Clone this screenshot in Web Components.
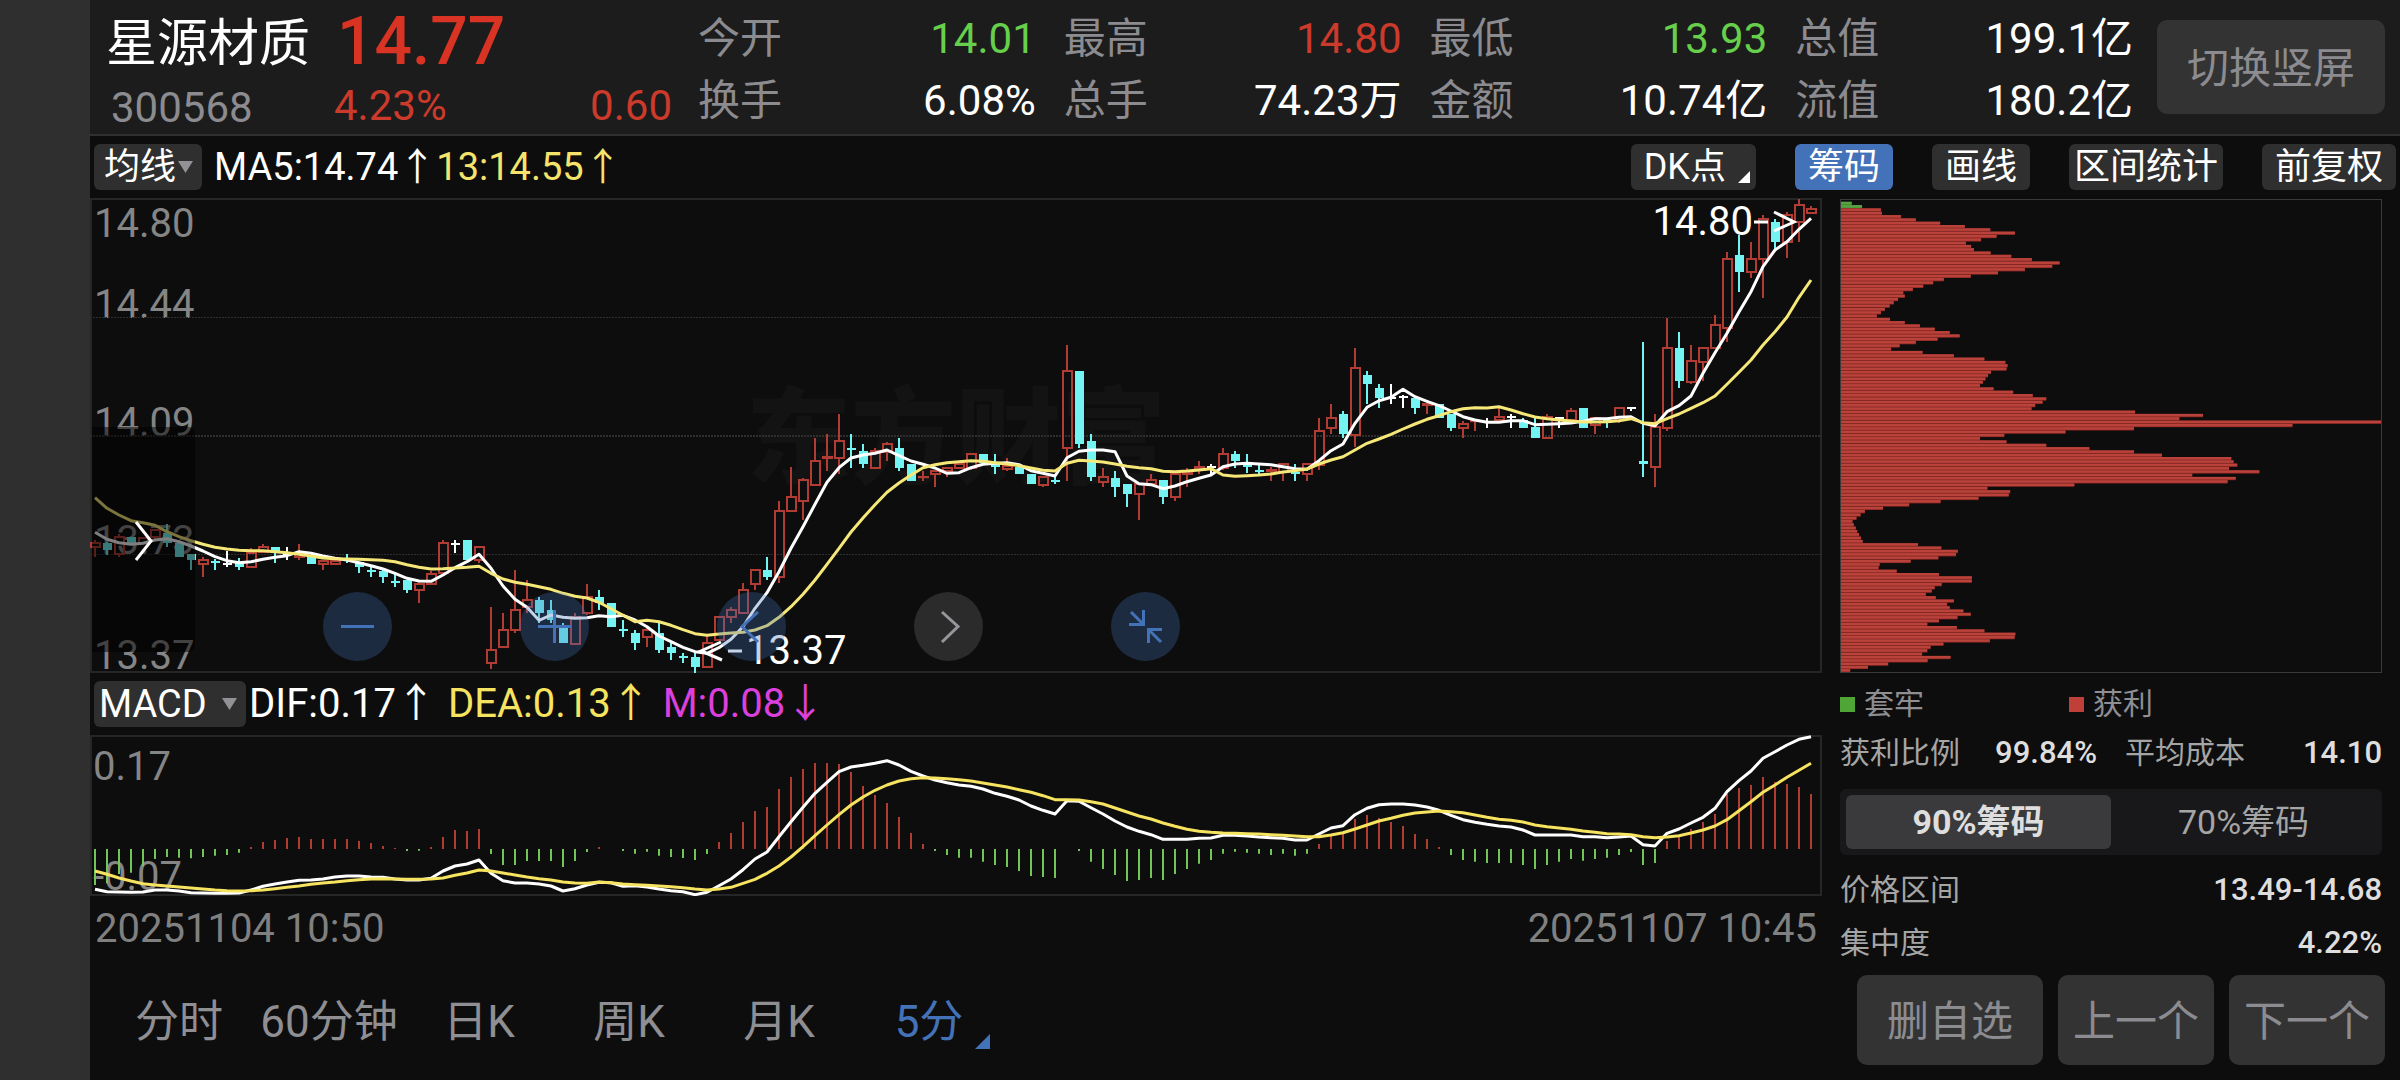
<!DOCTYPE html>
<html lang="zh-CN">
<head>
<meta charset="utf-8">
<meta name="viewport" content="width=device-width, initial-scale=1">
<title>星源材质 300568</title>
<style>
  html, body { margin: 0; background: #0d0d0d; }
  body {
    --up: #cc3a2b; --down: #66cf4b; --muted: #8b8b90; --blue: #4472b8; --panel: #333333; --line: #262626;
    font-family: Roboto, "Noto Sans CJK SC", sans-serif; color: #fff;
  }
</style>
</head>
<body>
<stock-page></stock-page>
<script>
const base = `<style>
  * { box-sizing: border-box; }
  button, select, input { font: inherit; color: inherit; margin: 0; border: 0; padding: 0; background: none; }
</style>`;
function define(name, html, setup) {
  customElements.define(name, class extends HTMLElement {
    connectedCallback() {
      if (this.shadowRoot) return;
      const root = this.attachShadow({ mode: "open" });
      root.innerHTML = base + (typeof html === "function" ? html(this) : html);
      if (setup) setup(root, this);
    }
  });
}

/* label and value pair in the header */
define("quote-stat", `<style>
  :host { display: flex; justify-content: space-between; font-size: 42px; line-height: 62px; white-space: nowrap; }
  .k { color: var(--muted); }
  :host([tone=up]) .v { color: var(--up); }
  :host([tone=down]) .v { color: var(--down); }
</style><span class="k"><slot name="label"></slot></span><span class="v"><slot></slot></span>`);

define("big-button", `<style>
  :host { display: flex; }
  button { flex: 1; background: var(--panel); color: var(--muted); border-radius: 10px; padding-top: 3px; font-size: 42px; line-height: 60px; white-space: nowrap; }
</style><button type="button"><slot></slot></button>`);

define("quote-header", () => {
  const s = (l, v, t = "") => `<quote-stat ${t && `tone="${t}"`}><span slot="label">${l}</span>${v}</quote-stat>`;
  return `<style>
  :host { display: flex; align-items: center; height: 136px; background: #1c1c1c; border-bottom: 2px solid #303030; padding: 0 15px 0 16px; }
  .id { width: 228px; padding-top: 6px; }
  .name { font-size: 51px; line-height: 76px; margin: 0; font-weight: 400; white-space: nowrap; }
  .code { font-size: 42px; line-height: 52px; color: var(--muted); padding: 0 0 0 5px; }
  .price { width: 338px; color: var(--up); padding-top: 2px; }
  .last { font-size: 66px; line-height: 76px; font-weight: 500; padding-left: 3px; color: #d93324; }
  .chg { display: flex; justify-content: space-between; font-size: 42px; line-height: 52px; }
  .stats { flex: 1; display: grid; grid-template-columns: repeat(4, 1fr); column-gap: 28px; padding: 6px 24px 0 26px; }
  big-button { width: 228px; height: 94px; }
</style>
<div class="id"><h1 class="name">星源材质</h1><div class="code">300568</div></div>
<div class="price"><div class="last">14.77</div><div class="chg"><span>4.23%</span><span>0.60</span></div></div>
<div class="stats">
${s("今开", "14.01", "down")}${s("最高", "14.80", "up")}${s("最低", "13.93", "down")}${s("总值", "199.1亿")}
${s("换手", "6.08%")}${s("总手", "74.23万")}${s("金额", "10.74亿")}${s("流值", "180.2亿")}
</div>
<big-button>切换竖屏</big-button>`;
});

define("tool-button", `<style>
  :host { display: block; }
  button { display: block; position: relative; background: #2f2f2f; border-radius: 6px; height: 46px; padding: 0 13px; font-size: 36px; line-height: 47px; white-space: nowrap; }
  :host([compact]) button { padding: 0 5px; }
  :host([menu]) button { padding-right: 30px; }
  :host([active]) button { background: var(--blue); }
  svg { display: none; position: absolute; right: 6px; bottom: 7px; }
  :host([menu]) svg { display: block; }
</style><button type="button"><slot></slot><svg width="12" height="12"><path d="M12 0V12H0z" fill="#fff"/></svg></button>`);

define("indicator-select", el => `<style>
  :host { display: block; position: relative; }
  select { display: block; appearance: none; background: #2f2f2f; border-radius: 6px; height: 46px; width: 100%; padding: 0 0 0 ${el.getAttribute("pad")}px; font-size: 36px; line-height: 46px; outline: 0; }
  :host([wide]) select { font-size: 38px; }
  svg { position: absolute; right: 9px; top: 17px; pointer-events: none; }
</style><select aria-label="指标"><option>${el.getAttribute("value")}</option></select>
<svg width="15" height="12"><path d="M0 0H15L7.5 12z" fill="#929296"/></svg>`);

define("indicator-value", `<style>
  :host { display: block; font-size: 38px; line-height: 46px; white-space: nowrap; }
</style><slot></slot>`);

define("chart-toolbar", `<style>
  :host { display: flex; align-items: center; justify-content: space-between; height: 62px; padding: 0 4px; }
  div { display: flex; align-items: center; }
  .r { gap: 39px; }
  indicator-select { width: 108px; margin-right: 12px; }
  .y { color: #f6e36c; }
</style>
<div><indicator-select value="均线" pad="10"></indicator-select><indicator-value>MA5:14.74↑</indicator-value><indicator-value class="y">13:14.55↑</indicator-value></div>
<div class="r"><tool-button menu>DK点</tool-button><tool-button active>筹码</tool-button><tool-button>画线</tool-button><tool-button compact>区间统计</tool-button><tool-button>前复权</tool-button></div>`);

/* candles: kind, high, body top, body bottom, low, in thirds of a pixel */
const candles = `r 1050 1059 1071 1100|c 1057 1060 1080 1095|r 1033 1041 1091 1100|c 1040 1040 1058 1060|r 1042 1043 1060 1060|r 1018 1020 1042 1050|c 1003 1030 1060 1070|c 1060 1060 1100 1100|c 1092 1092 1110 1140|r 1100 1110 1121 1160
c 1108 1112 1120 1140|w 1083 1118 1124 1130|c 1103 1117 1130 1140|r 1073 1088 1131 1132|r 1062 1071 1087 1090|c 1072 1072 1090 1120|w 1072 1090 1096 1110|r 1062 1093 1101 1110|c 1100 1100 1122 1122|r 1110 1112 1122 1140
r 1112 1113 1122 1123|c 1092 1108 1113 1120|c 1115 1115 1130 1150|c 1130 1140 1147 1160|c 1137 1142 1160 1180|c 1152 1172 1178 1190|c 1170 1170 1200 1210|r 1175 1181 1201 1240|r 1143 1151 1182 1182|r 1050 1059 1150 1150
w 1050 1058 1064 1090|c 1050 1050 1110 1110|r 1070 1071 1111 1120|r 1250 1379 1419 1438|r 1270 1319 1370 1371|r 1140 1259 1321 1328|r 1170 1229 1250 1270|c 1220 1230 1270 1300|c 1230 1260 1290 1300|c 1300 1310 1360 1360
r 1270 1280 1361 1362|r 1182 1221 1270 1275|c 1200 1220 1238 1260|c 1240 1240 1310 1310|c 1290 1317 1323 1340|c 1320 1330 1360 1380|r 1310 1319 1340 1370|c 1297 1330 1380 1390|c 1360 1370 1390 1410|c 1388 1398 1403 1420
c 1388 1400 1430 1450|r 1338 1359 1431 1431|r 1279 1280 1350 1350|r 1250 1260 1281 1300|r 1180 1200 1270 1270|r 1139 1140 1181 1200|c 1102 1140 1160 1170|r 933 962 1162 1180|r 832 921 963 963|r 863 871 933 990
r 743 812 884 884|r 733 802 803 843|r 673 753 803 853|c 733 774 780 833|c 763 783 823 833|r 775 784 833 833|r 755 762 785 812|c 743 773 833 843|c 822 822 872 872|r 843 861 862 872
r 842 843 853 892|r 832 833 843 860|r 822 823 833 833|r 791 792 833 840|c 793 793 820 820|c 793 820 830 853|r 803 827 837 843|c 830 830 853 853|c 852 852 882 882|r 861 862 885 891
c 860 870 877 882|r 465 543 774 872|c 544 544 763 773|c 733 753 862 872|r 833 861 875 890|c 843 863 890 921|c 882 882 912 951|r 880 881 912 991|r 853 871 882 882|c 871 871 921 941
r 852 852 922 932|r 835 850 853 891|r 813 831 835 853|w 822 829 835 852|r 773 792 835 840|c 783 793 812 833|c 793 815 830 850|c 825 839 845 852|r 830 839 843 872|r 822 823 846 872
c 822 845 852 872|r 822 823 853 872|r 684 722 825 840|r 643 683 714 732|c 663 673 733 743|r 475 534 734 770|c 544 554 583 643|c 583 593 623 653|w 583 622 628 643|w 615 619 625 653
c 623 623 653 672|r 640 641 644 672|c 643 643 683 683|c 672 672 713 722|r 693 702 714 743|r 690 692 694 722|w 683 692 698 713|r 650 682 690 690|w 673 679 685 713|c 683 690 713 713
c 683 712 743 743|r 673 682 745 745|w 680 680 686 713|r 653 662 690 690|c 653 653 713 713|r 680 683 705 732|c 683 690 700 713|r 652 653 690 700|w 650 650 656 662|c 455 814 821 862
r 673 712 832 891|r 385 474 713 722|c 425 474 573 593|r 465 513 577 583|r 473 474 515 573|r 375 404 475 475|r 186 206 415 455|c 136 195 245 305|r 156 206 247 265|r 76 87 206 325
c 87 97 156 178|r 67 74 157 205|r 27 46 97 156|r 48 56 69 69`.split(/[|\n]/).map(r => { const a = r.trim().split(" "); return [a[0], ...a.slice(1).map(Number)]; });

const ma5 = [1027,1048,1058,1063,1060,1050,1046,1055,1068,1083,1100,1112,1118,1115,1108,1102,1097,1085,1090,1098,1105,1110,1118,1127,1137,1150,1165,1173,1174,1155,1133,1115,1093,1135,1188,1228,1252,1291,1275,1282,1285,1283,1277,1280,1276,1290,1310,1338,1355,1372,1385,1390,1373,1348,1310,1255,1208,1145,1075,1010,943,877,833,804,795,790,780,797,813,823,834,850,848,833,823,820,818,824,842,850,858,803,784,780,780,785,858,881,884,896,888,875,865,855,830,822,820,822,824,830,836,838,812,782,762,700,652,632,622,598,620,634,647,663,680,690,697,697,692,692,704,703,701,699,694,686,686,682,680,700,707,665,647,618,550,488,430,366,305,230,180,155,118,85];
const ma13 = [923,955,975,992,998,1006,1025,1040,1052,1063,1072,1077,1081,1082,1082,1085,1088,1093,1098,1104,1106,1107,1108,1109,1111,1115,1124,1132,1137,1136,1134,1132,1129,1150,1167,1177,1183,1190,1198,1210,1219,1224,1237,1256,1276,1295,1291,1295,1306,1319,1331,1336,1332,1329,1327,1320,1307,1282,1250,1213,1170,1123,1075,1026,984,944,907,879,855,833,824,818,815,812,814,818,822,827,834,841,843,820,811,813,816,822,829,833,836,844,845,843,840,836,855,859,857,855,852,846,842,837,822,810,800,780,760,747,733,717,702,688,677,665,656,653,654,650,660,671,681,686,690,693,696,696,695,692,686,698,701,686,672,655,638,618,583,547,510,465,425,381,322,270];
const bars = [645,640,612,608,588,567,561,563,565,561,557,555,548,531,516,510,504,501,507,507,507,507,513,519,528,534,543,542,531,501,480,483,477,552,585,585,573,573,573,591,573,546,531,537,543,551,545,557,561,564,570,552,516,489,456,423,411,357,321,297,279,279,282,306,348,375,399,441,489,522,543,555,563,563,575,585,591,603,618,621,624,537,543,575,597,615,633,630,624,630,612,597,581,570,551,545,548,551,555,551,557,551,522,495,492,447,435,444,456,468,492,507,531,555,570,575,579,579,579,585,597,585,575,567,572,567,563,555,546,585,579,513,495,477,456,432,372,354,345,321,336,342,351,372];
const dif = [658,665,666,667,666,660,660,663,668,669,670,670,669,660,649,642,636,631,630,627,621,618,618,621,622,627,630,630,625,603,588,582,570,610,632,639,639,642,648,663,656,645,637,638,649,647,651,657,662,665,674,667,647,627,599,567,546,500,455,412,370,337,305,291,286,280,272,285,304,318,330,338,345,349,357,370,379,390,408,421,432,392,394,413,432,453,471,484,494,508,508,508,505,504,496,496,498,501,503,505,510,510,492,474,467,434,415,404,402,402,405,411,421,436,449,457,463,468,471,480,495,495,495,495,500,500,503,501,498,524,528,490,477,459,442,415,365,332,303,265,245,225,208,200];
const dea = [603,613,624,633,641,645,648,651,654,657,660,662,663,662,660,656,652,648,643,639,636,632,629,627,626,627,628,628,627,624,616,609,600,603,609,615,621,626,630,636,639,640,636,638,642,644,646,648,650,653,657,660,657,652,640,628,610,588,561,530,497,465,434,405,381,361,345,333,326,323,324,326,329,333,339,345,351,359,367,377,389,389,390,395,402,414,426,438,447,459,469,478,484,487,489,490,491,492,494,496,498,500,500,495,488,477,465,453,445,436,429,426,423,425,428,435,442,448,451,456,465,470,474,478,483,487,491,492,494,500,503,501,497,489,480,468,449,422,395,367,345,322,301,280];
const chips = [82,110,161,164,216,256,322,389,458,525,475,433,392,406,414,459,515,571,646,626,552,479,405,332,303,276,248,222,226,208,196,185,172,161,150,186,226,267,307,348,375,315,256,212,189,274,359,442,499,505,502,460,452,445,438,430,467,520,573,610,600,580,570,851,1035,971,1520,1278,848,662,496,430,502,610,727,848,924,1112,1118,1128,1106,1188,1006,1124,1102,686,450,512,508,426,323,238,167,118,106,95,84,88,93,97,102,107,112,262,325,370,365,317,242,158,155,204,319,408,408,326,307,299,283,310,359,341,348,385,405,369,319,287,367,442,526,524,457,331,296,287,273,350,288,181,126,78];

const cx = i => 5 + 12 * i;
const f = n => n.toFixed(1);
const poly = (vals, y, color, w = 3) => `<polyline fill="none" stroke="${color}" stroke-width="${w}" stroke-linejoin="round" points="${vals.map((v, i) => cx(i) + "," + f(y(v))).join(" ")}"/>`;

function drawCandles() {
  const line = v => v / 3 - 8, y = v => Math.round(v / 3) - 8;
  let out = "";
  for (const g of [380, 737, 1093]) out += `<path d="M0 ${y(g) + (g === 737 ? 0 : .5)}H1732" stroke="#2e2e2e" stroke-width="${g === 737 ? 2 : 1}" stroke-dasharray="2 1"/>`;
  candles.forEach(([k, h, t, b, l], i) => {
    const x = cx(i), c = k === "r" ? "#b03c34" : k === "c" ? "#74f3f3" : "#ffffff";
    if (k === "r") {
      out += `<path d="M${x} ${y(h)}V${y(t)}M${x} ${y(b)}V${y(l)}" stroke="${c}" stroke-width="2"/>`;
      out += `<rect x="${x - 4}" y="${y(t)}" width="9" height="${Math.max(y(b) - y(t), .2)}" fill="none" stroke="${c}" stroke-width="2"/>`;
    } else {
      out += `<path d="M${x} ${y(h)}V${y(l)}" stroke="${c}" stroke-width="2"/>`;
      out += `<rect x="${x - 4}" y="${y(t)}" width="9" height="${Math.max(y(b) - y(t), 2)}" fill="${c}"/>`;
    }
  });
  return out + poly(ma5, line, "#ffffff") + poly(ma13, line, "#f6e878");
}
function drawMacd() {
  const y = v => v / 3 - 65;
  return bars.map((v, i) => v === 537 ? "" : `<path d="M${cx(i)} ${Math.round(y(537))}V${f(y(v))}" stroke="${v < 537 ? "#b03c32" : "#72c658"}" stroke-width="2"/>`).join("")
    + poly(dif, y, "#ffffff") + poly(dea, y, "#f6e35f");
}
function drawChips() {
  const step = 1402 / (chips.length - 1) / 3;
  return chips.map((v, i) => {
    const w = (v - 53) / 2.7033, y = 1.8 + i * step, g = i < 2;
    return `<rect x="0" y="${f(y)}" width="${f(w)}" height="3.3" fill="${g ? "#3d8a2c" : "#8c2723"}"/><rect x="0" y="${f(y)}" width="${f(w)}" height="2.5" fill="${g ? "#58a244" : "#b9423b"}"/>`;
  }).join("");
}

define("round-button", el => {
  const icons = {
    minus: "M18 34.5H51", plus: "M18 34.5H51M34.5 18V51", prev: "M41 20L25 34.5L41 50", next: "M28 20L44 34.5L28 50",
    shrink: "M20 20L32 32M18 32.5H32.5V18M50 50L38 38M51 37.5H37.5V51"
  };
  return `<style>
  :host { display: block; }
  button { display: block; width: 69px; height: 69px; border-radius: 50%; background: rgba(68,114,184,.31); color: var(--blue); }
  :host([plain]) button { background: #2b2b2b; color: #97979b; }
  svg { display: block; }
</style><button type="button" aria-label="${el.getAttribute("icon")}"><svg width="69" height="69" fill="none" stroke="currentColor" stroke-width="3"><path d="${icons[el.getAttribute("icon")]}"/></svg></button>`;
});

define("price-chart", `<style>
  :host { display: block; position: relative; height: 475px; border: 2px solid var(--line); }
  svg.plot { position: absolute; inset: -2px; width: calc(100% + 4px); height: 475px; }
  .mark { position: absolute; left: 50%; top: 51%; transform: translate(-50%, -50%); font-size: 105px; line-height: 120px; font-weight: 900; color: #131313; white-space: nowrap; }
  .axis span, .note { position: absolute; font-size: 40px; line-height: 40px; }
  .axis span { left: 2px; color: #858585; }
  .note { color: #fff; }
  .fade { position: absolute; left: 0; top: 227px; width: 103px; height: 225px; background: rgba(0,0,0,.5); border-radius: 0 6px 6px 0; }
  .fade svg { position: absolute; left: 42px; top: 93px; }
  .ctl { position: absolute; left: 231px; bottom: 10px; display: flex; gap: 128px; }
</style>
<div class="mark">东方财富</div>
<div class="axis"><span style="top:4px">14.80</span><span style="top:85px">14.44</span><span style="top:203px">14.09</span><span style="top:321px">13.73</span><span style="top:436px">13.37</span></div>
<svg class="plot" viewBox="0 0 1732 475" preserveAspectRatio="none"><g class="data"></g>
<path d="M1664 24H1678M1684 14L1704 24L1684 33M638 453H652M631 444L611 453L632 462" fill="none" stroke="#fff" stroke-width="3"/></svg>
<span class="note" style="right:67px;top:2px">14.80</span><span class="note" style="left:654px;top:431px">13.37</span>
<div class="fade"><svg width="20" height="42"><path d="M2 2L17 21L2 40" fill="none" stroke="#fff" stroke-width="3"/></svg></div>
<div class="ctl"><round-button icon="minus"></round-button><round-button icon="plus"></round-button><round-button icon="prev"></round-button><round-button icon="next" plain></round-button><round-button icon="shrink"></round-button></div>`,
  root => { root.querySelector(".data").innerHTML = drawCandles(); });

define("macd-chart", `<style>
  :host { display: block; }
  .bar { display: flex; align-items: center; height: 62px; padding: 0 4px; }
  indicator-select { width: 152px; margin-right: 3px; }
  indicator-value { margin-right: 12px; font-size: 40px; }
  .box { position: relative; height: 161px; border: 2px solid var(--line); }
  .box svg { position: absolute; inset: -2px; width: calc(100% + 4px); height: 161px; }
  .box span { position: absolute; left: 1px; font-size: 40px; line-height: 40px; color: #858585; }
  .dates { display: flex; justify-content: space-between; padding: 1px 5px 0; font-size: 40px; line-height: 64px; color: #808080; }
</style>
<div class="bar"><indicator-select wide value="MACD" pad="5"></indicator-select><indicator-value>DIF:0.17↑</indicator-value><indicator-value style="color:#f6e35f">DEA:0.13↑</indicator-value><indicator-value style="color:#dc40dc">M:0.08↓</indicator-value></div>
<div class="box"><span style="top:10px">0.17</span><span style="bottom:-3px">-0.07</span><svg viewBox="0 0 1732 161" preserveAspectRatio="none"></svg></div>
<div class="dates"><time>20251104 10:50</time><time>20251107 10:45</time></div>`,
  root => { root.querySelector(".box svg").innerHTML = drawMacd(); });

define("period-tabs", `<style>
  :host { display: flex; padding: 3px 0 0 14px; height: 119px; align-items: center; }
  button { position: relative; width: 150px; font-size: 44px; line-height: 60px; color: #8e8e93; white-space: nowrap; }
  button[aria-selected=true] { color: var(--blue); }
  svg { position: absolute; right: 14px; bottom: 3px; }
</style>
<button role="tab" type="button">分时</button><button role="tab" type="button">60分钟</button><button role="tab" type="button">日K</button><button role="tab" type="button">周K</button><button role="tab" type="button">月K</button><button role="tab" type="button" aria-selected="true">5分<svg width="15" height="15"><path d="M15 0V15H0z" fill="currentColor"/></svg></button>`);

define("chip-panel", `<style>
  :host { display: block; font-size: 30px; color: #a5a5a5; white-space: nowrap; }
  .in { padding: 0 3px 0 1px; }
  .frame { height: 474px; border: 1px solid #3a3a3a; margin-top: 1px; }
  .frame svg { display: block; width: 100%; height: 472px; }
  .legend { display: grid; grid-template-columns: 229px 1fr; line-height: 62px; color: #8e8e93; }
  .legend span { display: flex; align-items: center; gap: 9px; }
  i { width: 15px; height: 15px; background: #4fa637; }
  .legend span + span i { background: #be4038; }
  .row { display: flex; justify-content: space-between; line-height: 53px; }
  .top { display: grid; grid-template-columns: 257px 1fr; column-gap: 28px; margin-bottom: 18px; }
  .top .row { line-height: 36px; }
  b { font-weight: 500; font-size: 31px; color: #dedede; }
  .seg { display: grid; grid-template-columns: 1fr 1fr; background: #18181a; border-radius: 6px; padding: 6px; margin: 0 0 8px; font-size: 34px; line-height: 54px; text-align: center; }
  input { position: absolute; opacity: 0; pointer-events: none; }
  label { border-radius: 6px; }
  input:checked + label { background: #3a3a3c; color: #dedede; font-weight: 700; }
  .foot { display: grid; grid-template-columns: 186px 156px 156px; justify-content: end; gap: 15px; margin-top: 6px; }
  big-button { height: 90px; }
</style>
<div class="in">
<div class="frame"><svg viewBox="0 0 542 472" preserveAspectRatio="none"></svg></div>
<div class="legend"><span><i></i>套牢</span><span><i></i>获利</span></div>
<div class="top"><div class="row"><span>获利比例</span><b>99.84%</b></div><div class="row"><span>平均成本</span><b>14.10</b></div></div>
<div class="seg"><input type="radio" name="c" id="c90" checked><label for="c90">90%筹码</label><input type="radio" name="c" id="c70"><label for="c70">70%筹码</label></div>
<div class="row"><span>价格区间</span><b>13.49-14.68</b></div>
<div class="row"><span>集中度</span><b>4.22%</b></div>
</div>
<div class="foot"><big-button>删自选</big-button><big-button>上一个</big-button><big-button>下一个</big-button></div>`,
  root => { root.querySelector(".frame svg").innerHTML = drawChips(); });

define("stock-page", `<style>
  :host { display: flex; min-height: 100vh; background: #0d0d0d; }
  aside { width: 90px; background: #2f2f2f; flex: none; }
  main { flex: 1; min-width: 0; }
  .body { display: grid; grid-template-columns: minmax(0, 1fr) 546px; column-gap: 17px; padding-right: 15px; }
</style>
<aside></aside>
<main>
<quote-header></quote-header>
<chart-toolbar></chart-toolbar>
<div class="body">
<div><price-chart></price-chart><macd-chart></macd-chart><period-tabs role="tablist"></period-tabs></div>
<chip-panel></chip-panel>
</div>
</main>`);
</script>
</body>
</html>
